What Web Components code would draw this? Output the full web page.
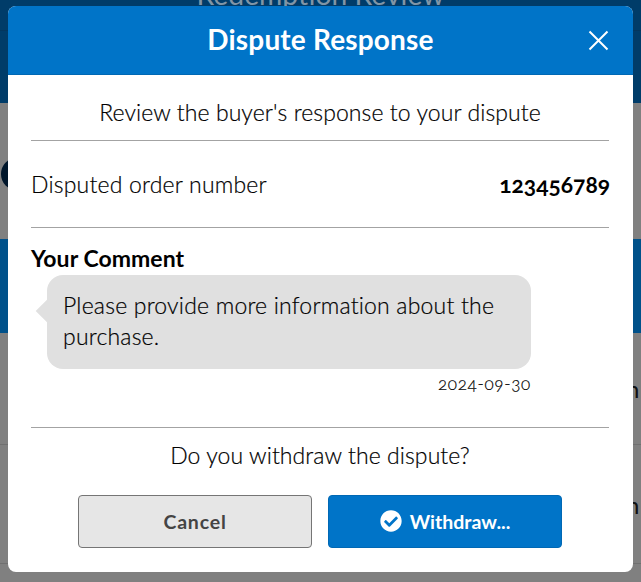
<!DOCTYPE html>
<html lang="en">
<head>
<meta charset="utf-8">
<title>Dispute Response</title>
<style>
  html, body { margin: 0; padding: 0; height: 100%; }
  body { overflow: hidden; font-family: "Lato", "Open Sans", sans-serif; color: #000; background: #808080; }
</style>
</head>
<body>
<backdrop-page></backdrop-page>
<dispute-dialog heading="Dispute Response">
  <p slot="intro">Review the buyer's response to your dispute</p>
  <info-row label="Disputed order number" value="123456789"></info-row>
  <comment-bubble heading="Your Comment" date="2024-09-30">Please provide more information about the purchase.</comment-bubble>
  <p slot="question">Do you withdraw the dispute?</p>
  <action-button slot="actions" kind="secondary">Cancel</action-button>
  <action-button slot="actions" kind="primary" icon="check">Withdraw...</action-button>
</dispute-dialog>
<script>
function define(name, css, html, init) {
  customElements.define(name, class extends HTMLElement {
    constructor() {
      super();
      const root = this.attachShadow({ mode: 'open' });
      root.innerHTML = '<style>' + css + '</style>' + html;
    }
    connectedCallback() { if (init) init(this, this.shadowRoot); }
  });
}

define('backdrop-page', `
  :host { display: block; width: 641px; height: 582px; overflow: hidden; background: #808080; font-family: "Lato", sans-serif; }
  .head { height: 103px; box-sizing: border-box; background: #003c69; }
  .top { height: 31px; box-sizing: border-box; border-bottom: 1px solid #03365e; display: flex; justify-content: center; overflow: hidden; }
  .top span { display: block; margin-top: -23px; font-size: 28.3px; line-height: 35px; color: #8095a6; white-space: nowrap; }
  .hero { height: 136px; box-sizing: border-box; padding: 55px 0 0 1px; }
  .dot { width: 30px; height: 32px; border-radius: 50%; background: #00162b; }
  .band { height: 94px; background: #00518a; }
  .row { box-sizing: border-box; border-bottom: 1px solid #707070; padding-left: 626px; color: #111; font-size: 24px; white-space: nowrap; overflow: hidden; }
  .r1 { height: 112px; padding-top: 42px; line-height: 28px; }
  .r2 { height: 119px; padding-top: 46px; line-height: 28px; }
`, `
  <div class="head"><div class="top"><span>Redemption Review</span></div></div>
  <div class="hero"><div class="dot"></div></div>
  <div class="band"></div>
  <div class="row r1">n</div>
  <div class="row r2">n</div>
`);

define('dispute-dialog', `
  :host { display: block; position: absolute; left: 8px; top: 6px; width: 625px; height: 566px; background: #fff; border-radius: 8px; overflow: hidden; font-family: "Lato", sans-serif; color: #000; }
  header { height: 69px; box-sizing: border-box; padding-bottom: 2px; background: #0074c8; border-bottom: 1px solid #0068b4; color: #fff; display: flex; align-items: center; justify-content: center; position: relative; }
  h2 { margin: 0; font-size: 28px; font-weight: 700; line-height: 34px; letter-spacing: .17px; }
  button { position: absolute; right: 24px; top: 24px; width: 21px; height: 21px; padding: 0; border: 0; background: none; display: block; }
  svg { display: block; }
  .body { padding: 0 24px 0 23px; }
  .intro { height: 66px; box-sizing: border-box; border-bottom: 1px solid #a3a3a3; padding-top: 23px; text-align: center; }
  .question { height: 43px; box-sizing: border-box; border-top: 1px solid #a3a3a3; padding-top: 13px; text-align: center; }
  ::slotted(p) { margin: 0; font-size: 23px; font-weight: 300; line-height: 28px; letter-spacing: .08px; -webkit-text-stroke: .2px #000; }
  .actions { display: flex; justify-content: center; gap: 16px; }
`, `
  <header><h2></h2>
    <button aria-label="Close"><svg width="21" height="21" viewBox="0 0 21 21"><path d="M1.5 1.5l18 18M19.5 1.5l-18 18" stroke="#fff" stroke-width="2" fill="none"/></svg></button>
  </header>
  <div class="body">
    <div class="intro"><slot name="intro"></slot></div>
    <slot></slot>
    <div class="question"><slot name="question"></slot></div>
    <div class="actions"><slot name="actions"></slot></div>
  </div>
`, (el, r) => { r.querySelector('h2').textContent = el.getAttribute('heading'); });

define('info-row', `
  :host { display: flex; align-items: center; justify-content: space-between; height: 87px; box-sizing: border-box; border-bottom: 1px solid #a3a3a3; padding-bottom: 1px; font-size: 23px; font-weight: 300; letter-spacing: .2px; }
  span { -webkit-text-stroke: .2px #000; }
  b { font-weight: 700; font-size: 22.8px; font-variant-numeric: oldstyle-nums; letter-spacing: 0; margin-right: -1px; }
`, `<span></span><b></b>`, (el, r) => {
  r.querySelector('span').textContent = el.getAttribute('label');
  r.querySelector('b').textContent = el.getAttribute('value');
});

define('comment-bubble', `
  :host { display: block; padding-top: 18px; }
  h3 { margin: 0 0 5px; font-size: 23px; line-height: 24px; font-weight: 700; letter-spacing: .05px; }
  .bubble { position: relative; margin-left: 16px; width: 484px; height: 94px; box-sizing: border-box; padding: 15px 16px; background: #e0e0e0; border-radius: 16px; font-size: 23px; font-weight: 300; line-height: 31px; letter-spacing: .2px; -webkit-text-stroke: .2px #000; }
  .bubble::before { content: ""; position: absolute; left: -8px; top: 28px; width: 16px; height: 16px; background: #e0e0e0; transform: rotate(45deg); }
  .date { margin: 5px 0 33px; width: 500px; text-align: right; font-size: 17px; line-height: 20px; letter-spacing: .7px; font-weight: 300; font-variant-numeric: oldstyle-nums; -webkit-text-stroke: .2px #000; }
`, `<h3></h3><div class="bubble"><slot></slot></div><div class="date"></div>`, (el, r) => {
  r.querySelector('h3').textContent = el.getAttribute('heading');
  r.querySelector('.date').textContent = el.getAttribute('date');
});

define('action-button', `
  :host { display: flex; align-items: center; justify-content: center; gap: 8px; width: 234px; height: 53px; box-sizing: border-box; margin-top: 25px; border-radius: 4px; font-size: 19.5px; font-weight: 700; }
  :host([kind=secondary]) { background: #e6e6e6; border: 1px solid #757575; color: #444; letter-spacing: .8px; }
  :host([kind=primary]) { background: #0074c8; border: 1px solid #0068b4; color: #fff; }
  svg { display: block; width: 22px; height: 22px; fill: currentColor; margin-top: -2px; }
`, `<span id="ic"></span><slot></slot>`, (el, r) => {
  const ic = r.getElementById('ic');
  if (el.getAttribute('icon') === 'check') {
    ic.innerHTML = '<svg viewBox="0 0 512 512"><path d="M504 256c0 136.967-111.033 248-248 248S8 392.967 8 256 119.033 8 256 8s248 111.033 248 248zM227.314 387.314l184-184c6.248-6.248 6.248-16.379 0-22.627l-22.627-22.627c-6.248-6.249-16.379-6.249-22.628 0L216 308.118l-70.059-70.059c-6.248-6.248-16.379-6.248-22.628 0l-22.627 22.627c-6.248 6.248-6.248 16.379 0 22.627l104 104c6.249 6.25 16.379 6.25 22.628.001z"/></svg>';
  } else { ic.remove(); }
});
</script>
</body>
</html>
